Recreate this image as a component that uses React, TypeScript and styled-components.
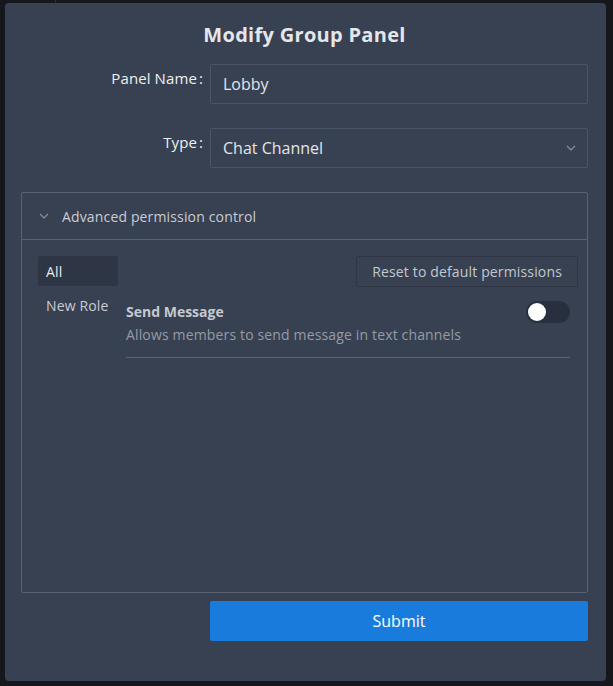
import React from "react";
import styled, { createGlobalStyle } from "styled-components";

const Global = createGlobalStyle`
  html, body { margin: 0; padding: 0; background: #15171d; }
  body { font-family: "Open Sans", "Noto Sans", sans-serif; }
  * { box-sizing: border-box; }
`;

const Backdrop = styled.div`
  width: 613px;
  height: 686px;
  background: #15171d;
  padding: 3px 7px 5px 5px;
  display: flex;
  position: relative;
`;

const SideLine = styled.div`
  position: absolute;
  left: 55px;
  top: 0;
  width: 1px;
  height: 3px;
  background: #2b2f38;
`;

const Modal = styled.div`
  flex: 1;
  background: #384152;
  border-radius: 4px;
  padding: 18px 18px 40px 16px;
  display: flex;
  flex-direction: column;
`;

const Title = styled.h2`
  margin: 0 0 16px;
  text-align: center;
  font-size: 20px;
  letter-spacing: 0.3px;
  line-height: 27px;
  font-weight: 700;
  color: #e4e6ea;
`;

const FormRow = styled.div`
  display: grid;
  grid-template-columns: 189px 1fr;
  margin-bottom: 24px;
`;

const Label = styled.label`
  text-align: right;
  padding-right: 7px;
  font-size: 15px;
  letter-spacing: 0.1px;
  color: #eef0f3;
  line-height: 29px;
`;

const Colon = styled.span`
  margin-left: 2px;
`;

const Input = styled.div`
  height: 40px;
  border: 1px solid #4b5466;
  border-radius: 2px;
  padding: 0 10px 0 12px;
  display: flex;
  align-items: center;
  justify-content: space-between;
  font-size: 16px;
  color: #e3e5e8;
`;

const Collapse = styled.div`
  border: 1px solid #5a6170;
  border-radius: 2px;
  height: 401px;
  display: flex;
  flex-direction: column;
  margin-bottom: 8px;
`;

const CollapseHeader = styled.div`
  height: 47px;
  border-bottom: 1px solid #5a6170;
  display: flex;
  align-items: center;
  gap: 12px;
  padding-left: 16px;
  font-size: 14px;
  letter-spacing: 0.15px;
  color: #c8ccd3;
`;

const CollapseBody = styled.div`
  flex: 1;
  padding: 16px 16px;
  display: flex;
  gap: 8px;
`;

const RoleList = styled.div`
  width: 80px;
  display: flex;
  flex-direction: column;
  gap: 4px;
`;

const RoleItem = styled.div<{ $active?: boolean }>`
  height: 30px;
  border-radius: 3px;
  padding: 0 8px;
  display: flex;
  align-items: center;
  font-size: 14px;
  letter-spacing: 0.15px;
  background: ${(p) => (p.$active ? "#2e3545" : "transparent")};
  color: ${(p) => (p.$active ? "#e7e9ec" : "#c8ccd3")};
`;

const PermPanel = styled.div`
  flex: 1;
  display: flex;
  flex-direction: column;
  padding-right: 1px;
`;

const Toolbar = styled.div`
  display: flex;
  justify-content: flex-end;
  margin-right: -8px;
  margin-bottom: 14px;
`;

const ResetButton = styled.button`
  height: 31px;
  padding: 0 15px;
  background: transparent;
  border: 1px solid #2f3544;
  border-radius: 2px;
  font-family: inherit;
  font-size: 14px;
  letter-spacing: 0.15px;
  color: #c3c7ce;
`;

const PermRow = styled.div`
  display: flex;
  justify-content: space-between;
  align-items: flex-start;
  padding-bottom: 12px;
  border-bottom: 1px solid #5c6372;
`;

const PermText = styled.div`
  display: flex;
  flex-direction: column;
  gap: 3px;
`;

const PermName = styled.div`
  font-size: 14px;
  font-weight: 700;
  color: #c5c9d0;
  line-height: 20px;
  margin-top: 1px;
`;

const PermDesc = styled.div`
  font-size: 14px;
  letter-spacing: 0.15px;
  color: #959ba6;
  line-height: 20px;
`;

const Switch = styled.div<{ $on?: boolean }>`
  width: 44px;
  height: 22px;
  border-radius: 11px;
  background: #283040;
  padding: 2px;
  display: flex;
  justify-content: ${(p) => (p.$on ? "flex-end" : "flex-start")};
  &::after {
    content: "";
    width: 18px;
    height: 18px;
    border-radius: 50%;
    background: #ffffff;
  }
`;

const SubmitRow = styled.div`
  display: grid;
  grid-template-columns: 189px 1fr;
`;

const SubmitButton = styled.button`
  grid-column: 2;
  height: 40px;
  border: none;
  border-radius: 2px;
  background: #197cdc;
  color: #ffffff;
  font-family: inherit;
  font-size: 16px;
`;

const Chevron = ({ color = "#8a909b" }: { color?: string }) => (
  <svg width="12" height="12" viewBox="0 0 12 12" fill="none">
    <path d="M2 4 L6 8 L10 4" stroke={color} strokeWidth="1.2" />
  </svg>
);

export default function App() {
  return (
    <>
      <Global />
      <Backdrop>
        <SideLine />
        <Modal>
          <Title>Modify Group Panel</Title>
          <FormRow>
            <Label>
              Panel Name<Colon>:</Colon>
            </Label>
            <Input>Lobby</Input>
          </FormRow>
          <FormRow>
            <Label>
              Type<Colon>:</Colon>
            </Label>
            <Input>
              Chat Channel
              <Chevron />
            </Input>
          </FormRow>
          <Collapse>
            <CollapseHeader>
              <Chevron />
              Advanced permission control
            </CollapseHeader>
            <CollapseBody>
              <RoleList>
                <RoleItem $active>All</RoleItem>
                <RoleItem>New Role</RoleItem>
              </RoleList>
              <PermPanel>
                <Toolbar>
                  <ResetButton>Reset to default permissions</ResetButton>
                </Toolbar>
                <PermRow>
                  <PermText>
                    <PermName>Send Message</PermName>
                    <PermDesc>Allows members to send message in text channels</PermDesc>
                  </PermText>
                  <Switch />
                </PermRow>
              </PermPanel>
            </CollapseBody>
          </Collapse>
          <SubmitRow>
            <SubmitButton>Submit</SubmitButton>
          </SubmitRow>
        </Modal>
      </Backdrop>
    </>
  );
}
